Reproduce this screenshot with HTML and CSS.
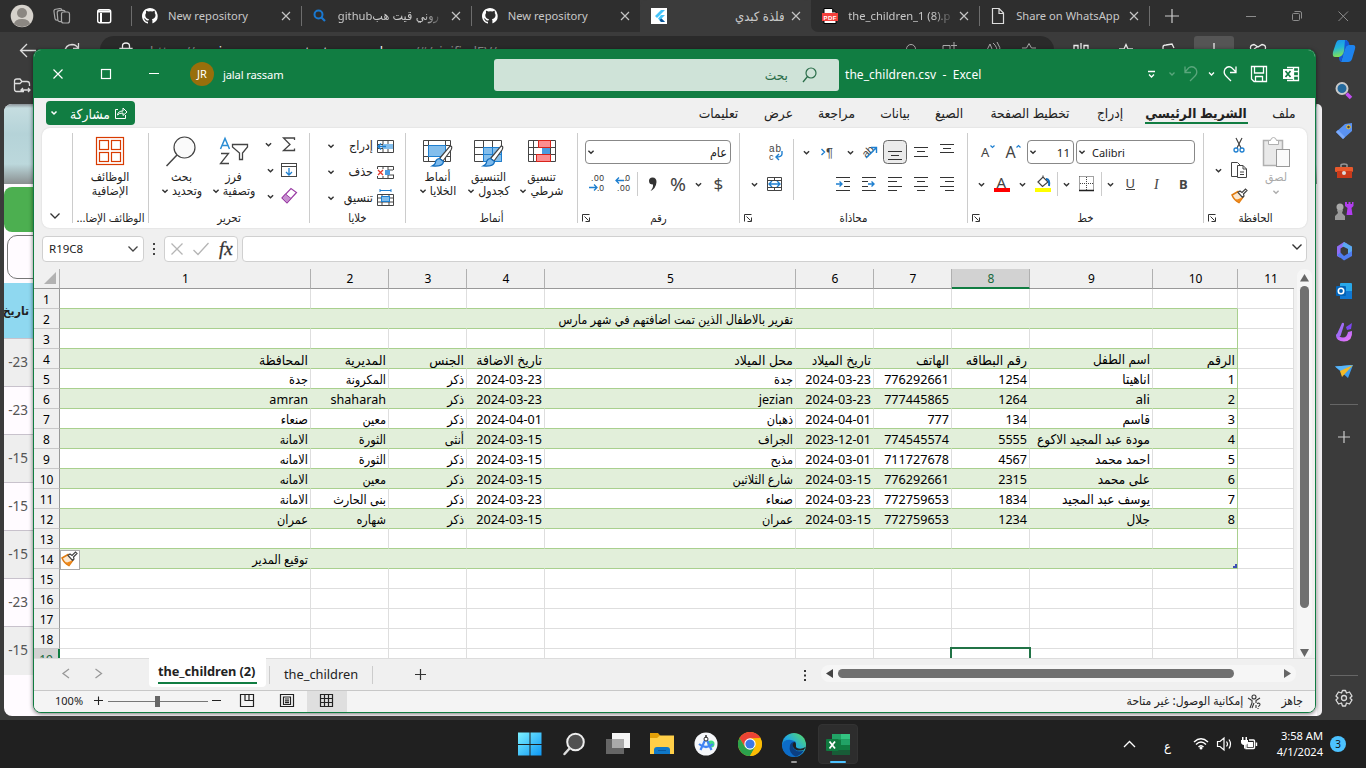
FILE: index.html
```html
<!DOCTYPE html>
<html lang="ar">
<head>
<meta charset="utf-8">
<title>the_children.csv - Excel</title>
<link rel="stylesheet" href="styles.css">
</head>
<body>
<svg class="defs" width="0" height="0">
  <defs>
    <path id="cv" d="M-2.6 -1.3L0 1.3L2.6 -1.3" fill="none" stroke="#333" stroke-width="1.4"/>
    <g id="x"><path d="M-4 -4L4 4M4 -4L-4 4" fill="none" stroke="#c4c4c4" stroke-width="1.2"/></g>
    <path id="gh" fill="#fff" d="M8 0C3.6 0 0 3.6 0 8c0 3.5 2.3 6.500 5.500 7.600.4.1.5-.2.5-.4v-1.500c-2 .4-2.600-.9-2.700-1.200-.3-.7-.7-1-1-1.200-.3-.2-.8-.7 0-.7s1.300.7 1.500 1c.9 1.400 2.200 1 2.700.8.1-.6.3-1 .6-1.300-2-.2-3.800-1-3.800-4 0-.9.3-1.600.8-2.100 0-.3-.4-1.200.1-2.300 0 0 .7-.2 2.200.8a7.500 7.500 0 0 1 4 0c1.500-1 2.200-.8 2.200-.8.5 1.100.2 2 .1 2.300.5.5.8 1.200.8 2.100 0 3-1.900 3.800-3.700 4 .3.3.6.7.6 1.500v2.300c0 .2.1.5.5.4A8 8 0 0 0 8 0z"/>
    <g id="launch" fill="none" stroke="#333"><path d="M.5 7.500V.5H7.500M2.500 2.500L6.500 6.500M7.500 3.500V7.500H3.500"/></g>
    <g id="brush"><path d="M1 7L7 3.500L12 9L8 14.500Q3 12 1 7z" fill="#fce8d0" stroke="#e07b10" stroke-width="1.500"/><path d="M3.500 10.500L8 14.500L11.500 9.500L6 11.500z" fill="#f08a1c"/><path d="M7 4.500L9 3L11 4.500L14.500 1L16 2.500L12.500 6L13 8L11.500 9.500z" fill="#fff" stroke="#444" stroke-width="1.200"/></g>
    <g id="paint"><path d="M27 2Q30 2 28 6L20 17L16.500 14.500z" fill="#fff" stroke="#444" stroke-width="1.200"/><path d="M16.500 14.500L20.500 17.500Q20 23 9 22Q13 20 12.500 17.500Q14 14.500 16.500 14.500z" fill="#7cb9ec" stroke="#0f6cbd" stroke-width="1.200"/></g>
    <linearGradient id="win" x1="0" y1="0" x2="1" y2="1"><stop offset="0" stop-color="#7df1ff"/><stop offset="1" stop-color="#0d97f5"/></linearGradient>
    <linearGradient id="edge" x1="0" y1="1" x2="1" y2="0"><stop offset="0" stop-color="#0b58b5"/><stop offset=".5" stop-color="#23a9e0"/><stop offset="1" stop-color="#5be05a"/></linearGradient>
    <linearGradient id="cop" x1="0" y1="0" x2=".2" y2="1"><stop offset="0" stop-color="#1a8ff0"/><stop offset=".5" stop-color="#23b5d8"/><stop offset="1" stop-color="#7ee05a"/></linearGradient>
    <linearGradient id="pur" x1="0" y1="0" x2="1" y2="1"><stop offset="0" stop-color="#9a5cff"/><stop offset="1" stop-color="#f07bf5"/></linearGradient>
  </defs>
</svg>

<div class="browser">
  <header class="tabstrip">
    <div class="lead">
      <svg width="131" height="32"><circle cx="22" cy="16" r="11.300" fill="#d6d2cc"/><circle cx="22" cy="13" r="5" fill="#8b8782"/><path d="M14 24Q15 19 22 19Q29 19 30 24Q22 30 14 24z" fill="#8b8782"/><g fill="#2e2e2e" stroke="#a8a8a8" stroke-width="1.200"><rect x="54.500" y="9" width="8" height="11" rx="2" transform="rotate(-8 58 15)"/><rect x="57.500" y="10.500" width="8" height="11" rx="2" transform="rotate(-5 61 16)"/><rect x="61.500" y="12" width="8" height="11" rx="2"/></g><rect x="97.700" y="9.700" width="13" height="13" rx="2" fill="none" stroke="#fff" stroke-width="1.400"/><path d="M98 11.500H111M101 13V22" stroke="#fff" stroke-width="2"/></svg>
    </div>
    <div class="tab"><svg width="16" height="16"><use href="#gh"/></svg><span class="tt">New repository</span><svg class="cl" width="10" height="10"><use href="#x" x="5" y="5"/></svg></div>
    <div class="tab"><svg width="16" height="16"><circle cx="6.500" cy="6.500" r="4" fill="none" stroke="#1a78d0" stroke-width="2"/><path d="M9.500 9.500L13 13" stroke="#1a78d0" stroke-width="2.200"/></svg><span class="tt fade">github<bdi>روني قيت هب</bdi></span><svg class="cl" width="10" height="10"><use href="#x" x="5" y="5"/></svg></div>
    <div class="tab"><svg width="16" height="16"><use href="#gh"/></svg><span class="tt">New repository</span><svg class="cl" width="10" height="10"><use href="#x" x="5" y="5"/></svg></div>
    <div class="tab active"><svg width="16" height="16"><rect width="16" height="16" fill="#fff"/><path d="M10 2L4 8L6 10L14 2zM10 7L7 10.500L10 14H14L10.500 10.500L14 7z" fill="#45c4f9"/><path d="M8.500 12L10.500 10.500L14 14H10z" fill="#0b5394"/></svg><span class="tt rt">فلذة كبدي</span><svg class="cl" width="10" height="10"><use href="#x" x="5" y="5"/></svg></div>
    <div class="tab nb"><svg width="16" height="16"><path d="M2 .5H10L14 4V15.500H2z" fill="#fff" stroke="#000"/><path d="M10 0V4.500H14.500z" fill="#222"/><rect x="0" y="5" width="16" height="8" fill="#f4403c"/><text x="1.500" y="11.500" font-size="6" font-weight="bold" fill="#fff" font-family="Liberation Sans" textLength="13">PDF</text></svg><span class="tt fade">the_children_1 (8).p</span><svg class="cl" width="10" height="10"><use href="#x" x="5" y="5"/></svg></div>
    <div class="tab"><svg width="16" height="16"><path d="M2.500 .5H9L13.500 5V15.500H2.500zM9 .5V5.500H13.500" fill="none" stroke="#ddd" stroke-width="1.200"/></svg><span class="tt">Share on WhatsApp</span><svg class="cl" width="10" height="10"><use href="#x" x="5" y="5"/></svg></div>
    <div class="tail"><svg width="217" height="32" viewBox="1149 0 217 32"><path d="M1165 16H1179M1172 9V23" stroke="#ccc" stroke-width="1.200"/><g fill="none" stroke="#8c8c8c"><path d="M1246 16.500H1256M1338.500 11.500L1348 21M1348 11.500L1338.500 21"/><rect x="1292.500" y="13.500" width="7" height="7" rx="1"/><path d="M1294.500 11.500H1300Q1301.500 11.500 1301.500 13V18.500"/></g></svg></div>
  </header>
  <div class="toolbar">
    <svg class="nav" width="100" height="80" viewBox="0 32 100 80"><g fill="none" stroke="#ddd" stroke-width="1.300"><path d="M36 50.500H21M27 44L20.500 50.500L27 57M65 52Q65 45 72 44.500Q76 44.500 78 48M78.500 43V48.500H73"/><path d="M24 91.500H16.500Q14.500 91.500 14.500 89V81Q14.500 79 17 79H20L22 81.500H27Q29.500 81.500 29.500 84V86M14.500 83.500H20L22 81.500M21 90H30M23 88L21 90L23 92M28 88L30 90L28 92"/></g></svg>
    <div class="address"><svg width="14" height="20"><path d="M1 8.500H13V16H1zM3.500 8.500V6Q3.500 3 7 3Q10.500 3 10.500 6V8.500" fill="none" stroke="#eee" stroke-width="1.300"/></svg><span class="url">https://<b>onniressonsunvestortenue.web.app</b>/#/vinifiedEV/</span><svg class="acts" width="136" height="20" viewBox="905 38 136 20"><g fill="none" stroke="#aaa"><circle cx="911" cy="49" r="4.500"/><path d="M943 56V45.500H950V56M954 42V49M951 45.500H957M985 54L990 44L994 54M993 43Q998 47 997 54M997 42Q1001 47 1000 54M1022 48H1026.500L1029 43.500L1031.500 48H1036"/></g></svg></div>
    <svg class="ext" width="260" height="18" viewBox="1060 36 260 18"><rect x="1194" y="36" width="40" height="20" rx="3" fill="#555"/><g fill="none" stroke="#eee" stroke-width="1.300"><path d="M1078 52V45.500H1074V52M1084 52V45.500H1088V52M1081 43V52M1119 49H1124L1126 44.500L1128 49H1133M1163 49V47Q1163 45 1166 45L1172 44L1174 48M1214 43V52M1251 50Q1249 45 1254 44.500L1258 47L1262 44.500Q1267 45 1265 50M1254 49L1257 47"/></g></svg>
  </div>
  <div class="work">
    <main class="page">
      <div class="photo"></div><div class="gbtn"></div><div class="wbtn"></div>
      <div class="th">تاريخ</div>
      <div class="td"><span>-23</span></div><div class="td"><span>-23</span></div><div class="td"><span>-15</span></div><div class="td"><span>-15</span></div><div class="td"><span>-15</span></div><div class="td"><span>-23</span></div><div class="td"><span>-15</span></div>
    </main>
    <div class="pageedge"></div>
  </div>
  <aside class="side">
    <svg viewBox="0 0 24 24"><path d="M7 1H15L12 14Q11 18 8 18H3Q0 18 1 13L4 4Q5 1 7 1z" fill="url(#cop)"/><path d="M16 6H21Q24 6 23 10L20 20Q19 23 16 23H9L13 10Q14 6 16 6z" fill="#1d83ee"/><path d="M13 1Q16 1 17 4L17.500 6Q14 6 13 10L9 23Q7 22 7 18Q11 17 12 12z" fill="#1458d8"/></svg>
    <svg viewBox="0 0 24 24"><circle cx="10" cy="9.500" r="5.500" fill="#246a9e" stroke="#c9c9c9" stroke-width="2"/><path d="M14.500 14.500L19 19" stroke="#c04df0" stroke-width="3.500"/></svg>
    <svg viewBox="0 0 24 24"><path d="M4 13L13 5L20 4V12L11 20Z" fill="#5a92f2"/><path d="M4 13L11 20L13 18L6 11z" fill="#7aaafc"/><circle cx="16.500" cy="8" r="1.800" fill="#444" stroke="#f3c32e"/></svg>
    <svg viewBox="0 0 24 24"><path d="M9 8V6Q9 5 12 5T15 6V8" fill="none" stroke="#999" stroke-width="1.500"/><rect x="3" y="8" width="18" height="5" rx="1" fill="#e8592c"/><rect x="5" y="12" width="15" height="7" fill="#c93a1b"/><circle cx="12" cy="14" r="2" fill="#ddd"/></svg>
    <svg viewBox="0 0 24 24"><circle cx="8" cy="8" r="3.500" fill="#aaa"/><path d="M5 11H11L10 14L13 17V21H3V17L6 14z" fill="#999"/><path d="M13 3H15V5H16.500V3H18.500V5H20V3H21.500V7L19.500 9L20.500 16H14.500L15.500 9L13 7z" fill="#b23df0"/></svg>
    <svg viewBox="0 0 24 24"><path d="M12 7.500L16 10V14.500L12 17L8 14.500V10z" fill="#3b3b3b"/><path d="M12 3L5 7.500V17L8.500 19V9.500L15.500 5z" fill="#8f6cf5"/><path d="M12 3L20 7.500V14L16 16V10L10 7z" fill="#5aa8f0"/><path d="M5 16L8.500 13.500L12 17L20 12V17L12 21.500z" fill="#4f7cf0"/></svg>
    <svg viewBox="0 0 24 24"><rect x="8" y="4" width="12" height="16" rx="1" fill="#28a8ea"/><path d="M8 12H20V20H8z" fill="#0f78d4"/><rect x="4" y="7" width="10" height="10" rx="1" fill="#0364b8"/><circle cx="9" cy="12" r="2.700" fill="none" stroke="#fff" stroke-width="1.600"/></svg>
    <svg viewBox="0 0 24 24"><path d="M6 15Q7 18.500 11 18.500Q15 18.500 16 13L20 12Q21 22 12 22.500Q4 22 4 16z" fill="url(#pur)"/><path d="M5.500 14L10 4Q12.500 3 12 6L8.500 17Q5 20 4 16z" fill="#a06cf5"/><path d="M14 8L20 4L19 10L15 11z" fill="#7b46f0"/></svg>
    <svg viewBox="0 0 24 24"><path d="M3 7.500L21 6L16 19L11 14.500z" fill="#3b9df0"/><path d="M3 7.500L21 6L9 12z" fill="#59b6fa"/><path d="M21 6L8 12L10 18z" fill="#f3b928"/></svg>
    <hr class="h1">
    <svg viewBox="0 0 24 24" class="plus"><path d="M6 12H18M12 6V18" stroke="#ccc" stroke-width="1.200"/></svg>
    <hr class="h2">
    <svg viewBox="0 0 24 24" class="gear"><g fill="none" stroke="#ddd" stroke-width="1.300"><path d="M10.500 4.500H13.500L14.500 7L17.500 6L20 10L18 12L20 14L17.500 18L14.500 17L13.500 20H10.500L9.500 17L6.500 18L4 14L6 12L4 10L6.500 6L9.500 7z" stroke-linejoin="round"/><circle cx="12" cy="12" r="2.500"/></g></svg>
  </aside>
</div>

<section class="excel">
  <div class="title">
    <svg width="160" height="48" viewBox="34 50 160 48"><g fill="none" stroke="#fff" stroke-width="1.200"><path d="M53.500 69.500L62.500 78.500M62.500 69.500L53.500 78.500M149 73.500H159"/><rect x="101.500" y="69.500" width="9" height="9"/></g></svg>
    <span class="jr">JR</span><span class="uname">jalal rassam</span>
    <div class="search"><span>بحث</span><svg width="16" height="16"><circle cx="9" cy="6" r="5" fill="none" stroke="#2b6e4a" stroke-width="1.200"/><path d="M5.500 9.500L1 15" stroke="#2b6e4a" stroke-width="1.300"/></svg></div>
    <span class="doc">the_children.csv&nbsp; -&nbsp; Excel</span>
    <svg class="qat" width="175" height="48" viewBox="1140 50 175 48"><g fill="none" stroke="#fff" stroke-width="1.300"><path d="M1148 71.500H1155M1149 74.500L1151.500 77L1154 74.500"/><path d="M1209 72.500L1211.500 75L1214 72.500"/><path d="M1236 66.500V72.500H1230M1236 72L1231.500 67.500Q1228 65.500 1225 69Q1223 73 1226 76L1231 81"/><g stroke="#5aa67c"><path d="M1169.500 72.500L1172 75L1174.500 72.500M1185 66.500V72.500H1191M1185 72L1189 67.500Q1193 65.500 1196 69Q1198 73 1195 76L1190 81"/></g><path d="M1251.500 66.500H1266.500V81.500H1254L1251.500 79zM1254.500 66.500V73H1263.500V66.500M1255.500 81V76.500H1262.500V81"/><path d="M1287 67.500H1298.500V80.500H1287M1287 71.500H1299M1287 76H1299M1293.500 67V81"/></g><rect x="1283" y="69" width="10" height="10" fill="#fff"/><path d="M1285.500 71L1290.500 77M1290.500 71L1285.500 77" stroke="#107c41" stroke-width="1.700"/></svg>
  </div>

  <nav class="tabs">
    <div class="share"><svg width="10" height="8"><path d="M2.500 2.500L5 5L7.500 2.500" fill="none" stroke="#fff" stroke-width="1.500"/></svg><span>مشاركة</span><svg width="14" height="14"><path d="M4 3.500H1.500V12.500H11.500V9M3.500 9Q4 5 9 5V2L13 6L9 9.500V7Q5 7 3.500 9z" fill="none" stroke="#fff"/></svg></div>
    <div class="rtabs"><span>تعليمات</span><span>عرض</span><span>مراجعة</span><span>بيانات</span><span>الصيغ</span><span>تخطيط الصفحة</span><span>إدراج</span><span class="on"><b>الشريط الرئيسي</b></span><span>ملف</span></div>
  </nav>

  <div class="ribbon">
    <div class="g g0"><svg width="12" height="8"><path d="M1.500 1.500L6 6L10.500 1.500" fill="none" stroke="#333" stroke-width="1.300"/></svg></div>
    <div class="g g1"><div class="body"><div class="big"><svg width="30" height="38" viewBox="0 0 30 38"><g fill="none" stroke="#d83b01" stroke-width="1.200"><rect x="1.500" y="5.500" width="27" height="27"/><rect x="4.500" y="8.500" width="9" height="9"/><rect x="16.500" y="8.500" width="9" height="9"/><rect x="4.500" y="20.500" width="9" height="9"/><rect x="16.500" y="20.500" width="9" height="9"/></g></svg><span>الوظائف</span><span>الإضافية</span></div></div><div class="lab"><span>الوظائف الإضا...</span></div></div>
    <div class="g g2"><div class="body">
      <div class="big"><svg width="32" height="38" viewBox="166 132 32 38"><circle cx="184.500" cy="147.500" r="10.500" fill="#fafafa" stroke="#444" stroke-width="1.200"/><path d="M177 155L166.500 166" stroke="#444" stroke-width="1.500"/></svg><span>بحث</span><span class="dd">وتحديد<svg width="8" height="6"><use href="#cv" x="4" y="3"/></svg></span></div>
      <div class="big"><svg width="32" height="38" viewBox="217 132 32 38"><path d="M219.500 149L224 138.500L228.500 149M221 145.500H227" fill="none" stroke="#2a8dd4" stroke-width="1.500"/><path d="M220 153.500H227.500L219.500 163.500H228M231.500 144.500H246.500V147L241.500 153V159.500H238.500V153L231.500 147z" fill="none" stroke="#444" stroke-width="1.300"/></svg><span>فرز</span><span class="dd">وتصفية<svg width="8" height="6"><use href="#cv" x="4" y="3"/></svg></span></div>
      <svg width="40" height="78" viewBox="262 132 40 78"><use href="#cv" x="268.500" y="144.500"/><use href="#cv" x="270.500" y="170.500"/><use href="#cv" x="270.500" y="196.500"/><path d="M294.500 140V138H283.500L290 144.500L283.500 150.500H294.500V148.500" fill="none" stroke="#444" stroke-width="1.300"/><rect x="281.500" y="163.500" width="15" height="13" fill="#fff" stroke="#444"/><path d="M281 166.500H297" stroke="#444"/><path d="M289 168V175M286 172L289 175L292 172" fill="none" stroke="#1e7fd0" stroke-width="1.300"/><path d="M282 198L291 188.500L296.500 192.500L287 203z" fill="#fff" stroke="#9b3fa5" stroke-width="1.200"/><path d="M282 198L285.500 194L291 198.500L287 203z" fill="#c78fd0" stroke="#9b3fa5"/></svg>
    </div><div class="lab"><span>تحرير</span></div></div>
    <div class="g g3"><div class="body col">
      <div class="sm"><svg width="8" height="6"><use href="#cv" x="4" y="3"/></svg><span>إدراج</span><svg width="17" height="15" viewBox="0 0 17 15"><path d="M.5 1.500H16.500V13.500H.5zM.5 5.500H16M.5 9.500H16M6 1V14M11 1V14" fill="none" stroke="#444"/><rect x="6" y="5" width="10" height="5" fill="#83beec"/><path d="M9 7.500H1M4 4.500L1 7.500L4 10.500" fill="none" stroke="#1e7fd0" stroke-width="1.300"/></svg></div>
      <div class="sm"><svg width="8" height="6"><use href="#cv" x="4" y="3"/></svg><span>حذف</span><svg width="17" height="15" viewBox="0 0 17 15"><path d="M.5 4V1.500H16.500V5M16.500 9.500V13.500H.5V11M6 1V4M11 1V14M6 11V14M11 5H16M11 10H16" fill="none" stroke="#444"/><rect x="8" y="5" width="5" height="5" fill="#4a9be0"/><path d="M1 5L6 10M6 5L1 10" stroke="#e03a2f" stroke-width="1.300"/></svg></div>
      <div class="sm"><svg width="8" height="6"><use href="#cv" x="4" y="3"/></svg><span>تنسيق</span><svg width="17" height="18" viewBox="0 0 17 18"><path d="M.5 5.500H16.500V16.500H.5zM.5 9H16M.5 13H16M5 5V17M12 5V17" fill="none" stroke="#444"/><rect x="4.500" y="7.500" width="8" height="5" fill="#83beec" stroke="#1e7fd0"/><path d="M3 1.500H14M3 0V3M14 0V3" stroke="#1e7fd0"/></svg></div>
    </div><div class="lab"><span>خلايا</span></div></div>
    <div class="g g4"><div class="body">
      <div class="big"><svg width="32" height="38" viewBox="-1 -8 32 38"><path d="M.5 .5H27.500V21.500H.5zM.5 5.500H27M.5 16.500H27M5.500 0V22M22.500 0V22" fill="#fff" stroke="#444"/><rect x="5.500" y="5.500" width="17" height="11" fill="#83beec" stroke="#1e7fd0"/><use href="#paint" y="4"/></svg><span>أنماط</span><span class="dd">الخلايا<svg width="8" height="6"><use href="#cv" x="4" y="3"/></svg></span></div>
      <div class="big"><svg width="32" height="38" viewBox="-1 -8 32 38"><path d="M.5 .5H27.500V21.500H.5zM.5 7.500H27M.5 14.500H27M9.500 0V22M18.500 0V22" fill="#fff" stroke="#444"/><path d="M9.500 7.500H27.500V21.500H9.500zM9.500 14.500H27M18.500 7.500V21" fill="#83beec" stroke="#1e7fd0"/><use href="#paint" y="4"/></svg><span>التنسيق</span><span class="dd">كجدول<svg width="8" height="6"><use href="#cv" x="4" y="3"/></svg></span></div>
      <div class="big"><svg width="32" height="38" viewBox="-2 -8 32 38"><path d="M.5 .5H27.500V21.500H.5zM.5 7.500H27M.5 14.500H27M5.500 0V22M22.500 0V22" fill="#fff" stroke="#444"/><path d="M10.500 .5H22.500V7.500H10.500zM8.500 14.500H22.500V21.500H8.500z" fill="#fb8d90" stroke="#d8241b"/><rect x="14" y="8" width="8" height="6" fill="#4a9be0"/></svg><span>تنسيق</span><span class="dd">شرطي<svg width="8" height="6"><use href="#cv" x="4" y="3"/></svg></span></div>
    </div><div class="lab"><span>أنماط</span></div></div>
    <div class="g g5"><div class="body col">
      <div class="combo wide"><svg width="8" height="6"><use href="#cv" x="4" y="3"/></svg><span>عام</span></div>
      <svg width="161" height="28" viewBox="578 170 161 28"><g font-family="Liberation Sans,sans-serif" font-size="8.500" fill="#333"><text x="591" y="181" textLength="13">.00</text><text x="597" y="191" textLength="7">.0</text><text x="624" y="181" textLength="6">.0</text><text x="617" y="191" textLength="13">.00</text></g><g font-family="Noto Sans,sans-serif" fill="#444"><text x="670" y="190.500" font-size="18" textLength="16" lengthAdjust="spacingAndGlyphs">%</text><text x="713.500" y="190" font-size="17">$</text></g><path d="M652.500 177.500Q656.500 177.500 656.500 182Q656 188.500 650.500 191Q653.500 187.500 653 184.500Q649 184.500 649 181Q649 177.500 652.500 177.500z" fill="#333"/><path d="M589 187.500H597M594 184.500L597 187.500L594 190.500M624 180.500H616M619 177.500L616 180.500L619 183.500" fill="none" stroke="#1e7fd0" stroke-width="1.300"/><path d="M637.500 172V196" stroke="#ccc"/><use href="#cv" x="698.500" y="184.500"/></svg>
    </div><div class="lab"><span>رقم</span><svg width="8" height="8"><use href="#launch"/></svg></div></div>
    <div class="g g6"><div class="body">
      <svg width="227" height="80" viewBox="740 132 227 80"><path d="M793.500 139V200" stroke="#ccc"/><rect x="883.500" y="140.500" width="23" height="23" rx="4" fill="#ebebeb" stroke="#666"/>
      <g font-family="Liberation Sans,sans-serif" fill="#444" font-size="11"><text x="769" y="152" font-size="10" textLength="12">ab</text><text x="769" y="160" font-size="9">c</text><text x="826" y="157" font-size="13">¶</text><text x="862" y="156" transform="rotate(-45 867 152)" textLength="12">ab</text></g>
      <g fill="none" stroke="#1e7fd0" stroke-width="1.400"><path d="M782 151V154Q782 157 776 157M779 154L776 157L779 160M821.500 149L824.500 152L821.500 155M866 158L876 148M871 147.500H876.500V153"/><path d="M769 184H780M772 181L769 184L772 187M777 181L780 184L777 187M836 184H842M839.500 181.500L842 184L839.500 186.500M868 184H874M871.500 181.500L874 184L871.500 186.500"/></g>
      <path d="M767.500 177.500H781.500V190.500H767.500zM767.500 180.500H781.500M767.500 187.500H781.500M774.500 177.500V180.500M774.500 187.500V190.500" fill="none" stroke="#444"/>
      <g stroke="#333"><path d="M888 151.500H902M891 155.500H899M888 159.500H902M914 147.500H928M917 151.500H925M914 156.500H928M940 144.500H954M943 148.500H951M940 152.500H954"/><path d="M836 177.500H850M844 181.500H850M844 186.500H850M836 190.500H850M862 177.500H876M862 181.500H868M862 186.500H868M862 190.500H876M888 177.500H902M888 181.500H897M888 186.500H902M888 190.500H897M914 177.500H928M917 181.500H925M914 186.500H928M917 190.500H925M940 177.500H954M945 181.500H954M940 186.500H954M945 190.500H954"/></g>
      <use href="#cv" x="806.500" y="152.500"/><use href="#cv" x="850.500" y="152.500"/><use href="#cv" x="754.500" y="184.500"/></svg>
    </div><div class="lab"><span>محاذاة</span><svg width="8" height="8"><use href="#launch"/></svg></div></div>
    <div class="g g7"><div class="body col">
      <div class="frow"><svg width="54" height="24" viewBox="973 140 54 24"><g font-family="Noto Sans,sans-serif" fill="#444"><text x="981" y="157" font-size="13">A</text><text x="1005.500" y="157.500" font-size="16">A</text></g><path d="M990.500 145.500L992.500 147.500L994.500 145.500M1016.500 147.500L1018.500 145.500L1020.500 147.500" fill="none" stroke="#1e7fd0" stroke-width="1.200"/></svg>
        <div class="combo s"><svg width="8" height="6"><use href="#cv" x="4" y="3"/></svg><span>11</span></div><div class="combo f"><svg width="8" height="6"><use href="#cv" x="4" y="3"/></svg><span>Calibri</span></div></div>
      <svg width="230" height="28" viewBox="973 170 230 28"><g font-family="Noto Sans,sans-serif" fill="#444"><text x="996.500" y="188" font-size="15">A</text><text x="1125.500" y="188" font-size="13">U</text><text x="1154" y="188.500" font-size="14" font-style="italic" font-family="Liberation Serif">I</text><text x="1179" y="188.500" font-size="13" font-weight="bold">B</text></g><path d="M1126 189.500H1135" stroke="#444"/><rect x="994" y="188" width="16" height="4" fill="#f00"/><rect x="1035" y="188" width="16" height="4" fill="#ff0"/><path d="M1038 182L1043 177L1048 182L1042.500 186.500zM1043 177V175.500" fill="#fff" stroke="#444" stroke-width="1.200"/><path d="M1046 179Q1050 179 1049 186" stroke="#0f6cbd" stroke-width="2" fill="none"/><path d="M1057.500 172V196M1101.500 172V196" stroke="#ccc"/><path d="M1079.500 176.500H1093.500V190M1079.500 176.500V190M1086.500 177V190M1080 183.500H1093" fill="none" stroke="#444" stroke-dasharray="1 1"/><path d="M1079 190.500H1094" stroke="#222" stroke-width="1.500"/><use href="#cv" x="981.500" y="184.500"/><use href="#cv" x="1022.500" y="184.500"/><use href="#cv" x="1066.500" y="184.500"/><use href="#cv" x="1110.500" y="184.500"/></svg>
    </div><div class="lab"><span>خط</span><svg width="8" height="8"><use href="#launch"/></svg></div></div>
    <div class="g g8"><div class="body">
      <svg width="48" height="78" viewBox="1205 132 48 78"><path d="M1236 138L1241 148M1242 138L1237 148" stroke="#444" stroke-width="1.200"/><g fill="none" stroke="#1e7fd0" stroke-width="1.300"><circle cx="1236" cy="150" r="2"/><circle cx="1242" cy="150" r="2"/></g><g fill="#fff" stroke="#444"><path d="M1231.500 162.500H1237.500L1240 165V176.500H1231.500z"/><path d="M1237.500 165.500H1243L1246.500 169V177.500H1237.500zM1243 165.500V169H1246.500M1240 172H1244M1240 174.500H1244"/></g><use href="#brush" x="1231" y="188"/><use href="#cv" x="1218.500" y="170.500"/></svg>
      <div class="big paste"><svg width="30" height="38" viewBox="1261 132 30 38"><rect x="1263.500" y="140.500" width="19" height="25" fill="#e9e9e9" stroke="#b0b0b0" stroke-width="1.500"/><path d="M1268.500 144.500V140.500H1270.500Q1271 137.500 1273.500 137.500T1276.500 140.500H1278.500V144.500z" fill="#fff" stroke="#b0b0b0"/><rect x="1276.500" y="149.500" width="13" height="17" fill="#fafafa" stroke="#999"/></svg><span>لصق</span><svg width="8" height="6" opacity=".4"><use href="#cv" x="4" y="3"/></svg></div>
    </div><div class="lab"><span>الحافظة</span><svg width="8" height="8"><use href="#launch"/></svg></div></div>
  </div>

  <div class="fbar">
    <div class="box name"><span>R19C8</span><svg width="12" height="8"><path d="M1.500 1.500L6 6L10.500 1.500" fill="none" stroke="#444" stroke-width="1.300"/></svg></div>
    <svg width="20" height="14"><path d="M9 1h2v2h-2zM9 6h2v2h-2zM9 11h2v2h-2z" fill="#444"/></svg>
    <div class="box fx"><svg width="42" height="16"><path d="M1.500 2.500L12.500 13.500M12.500 2.500L1.500 13.500M23.500 9L28 13.500L38.500 2" fill="none" stroke="#b5b5b5" stroke-width="1.300"/></svg><i>fx</i></div>
    <div class="box formula"><svg width="12" height="8"><path d="M1.500 1.500L6 6L10.500 1.500" fill="none" stroke="#333" stroke-width="1.400"/></svg></div>
  </div>

  <div class="sheet">
    <div class="gridclip">
    <table class="grid">
      <colgroup><col class="c0"><col class="w251"><col class="w78"><col class="w78"><col class="w78"><col class="w251"><col class="w78"><col class="w78"><col class="w78"><col class="w123"><col class="w85"><col class="w56"></colgroup>
      <thead><tr><th class="corner"><svg width="13" height="13"><path d="M12 0V12H0z" fill="#b2b2b2"/></svg></th><th>1</th><th>2</th><th>3</th><th>4</th><th>5</th><th>6</th><th>7</th><th class="sel">8</th><th>9</th><th>10</th><th class="last">11</th></tr></thead>
      <tbody>
      <tr class="gl"><th>1</th><td></td><td></td><td></td><td></td><td></td><td></td><td></td><td></td><td></td><td></td><td></td></tr>
      <tr class="gl gr"><th>2</th><td></td><td></td><td></td><td></td><td>تقرير بالاطفال الذين تمت اضافتهم في شهر مارس</td><td></td><td></td><td></td><td></td><td></td><td></td></tr>
      <tr class="gl"><th>3</th><td></td><td></td><td></td><td></td><td></td><td></td><td></td><td></td><td></td><td></td><td></td></tr>
      <tr class="gl gr heads"><th>4</th><td>المحافظة</td><td>المديرية</td><td>الجنس</td><td>تاريخ الاضافة</td><td>محل الميلاد</td><td>تاريخ الميلاد</td><td>الهاتف</td><td>رقم البطاقه</td><td>اسم الطفل</td><td>الرقم</td><td></td></tr>
      <tr class="gl"><th>5</th><td>جدة</td><td>المكرونة</td><td>ذكر</td><td>2024-03-23</td><td>جدة</td><td>2024-03-23</td><td>776292661</td><td>1254</td><td>اناهيتا</td><td>1</td><td></td></tr>
      <tr class="gl gr"><th>6</th><td>amran</td><td>shaharah</td><td>ذكر</td><td>2024-03-23</td><td>jezian</td><td>2024-03-23</td><td>777445865</td><td>1264</td><td>ali</td><td>2</td><td></td></tr>
      <tr class="gl"><th>7</th><td>صنعاء</td><td>معين</td><td>ذكر</td><td>2024-04-01</td><td>ذهبان</td><td>2024-04-01</td><td>777</td><td>134</td><td>قاسم</td><td>3</td><td></td></tr>
      <tr class="gl gr"><th>8</th><td>الامانة</td><td>الثورة</td><td>أنثى</td><td>2024-03-15</td><td>الجراف</td><td>2023-12-01</td><td>774545574</td><td>5555</td><td>مودة عبد المجيد الاكوع</td><td>4</td><td></td></tr>
      <tr class="gl"><th>9</th><td>الامانه</td><td>الثورة</td><td>ذكر</td><td>2024-03-15</td><td>مذبح</td><td>2024-03-01</td><td>711727678</td><td>4567</td><td>احمد محمد</td><td>5</td><td></td></tr>
      <tr class="gl gr"><th>10</th><td>الامانه</td><td>معين</td><td>ذكر</td><td>2024-03-15</td><td>شارع الثلاثين</td><td>2024-03-15</td><td>776292661</td><td>2315</td><td>على محمد</td><td>6</td><td></td></tr>
      <tr class="gl"><th>11</th><td>الامانة</td><td>بنى الحارث</td><td>ذكر</td><td>2024-03-23</td><td>صنعاء</td><td>2024-03-23</td><td>772759653</td><td>1834</td><td>يوسف عبد المجيد</td><td>7</td><td></td></tr>
      <tr class="gl gr"><th>12</th><td>عمران</td><td>شهاره</td><td>ذكر</td><td>2024-03-15</td><td>عمران</td><td>2024-03-15</td><td>772759653</td><td>1234</td><td>جلال</td><td>8</td><td></td></tr>
      <tr class="gl"><th>13</th><td></td><td></td><td></td><td></td><td></td><td></td><td></td><td></td><td></td><td></td><td></td></tr>
      <tr class="gl gr"><th>14</th><td class="rel"><span class="paint"><svg width="18" height="17" viewBox="0 0 18 17"><use href="#brush"/></svg></span>توقيع المدير</td><td></td><td></td><td></td><td></td><td></td><td></td><td></td><td></td><td class="rel"><i class="handle"></i></td><td></td></tr>
      <tr><th>15</th><td></td><td></td><td></td><td></td><td></td><td></td><td></td><td></td><td></td><td></td><td></td></tr>
      <tr><th>16</th><td></td><td></td><td></td><td></td><td></td><td></td><td></td><td></td><td></td><td></td><td></td></tr>
      <tr><th>17</th><td></td><td></td><td></td><td></td><td></td><td></td><td></td><td></td><td></td><td></td><td></td></tr>
      <tr><th>18</th><td></td><td></td><td></td><td></td><td></td><td></td><td></td><td></td><td></td><td></td><td></td></tr>
      <tr><th class="rsel">19</th><td></td><td></td><td></td><td></td><td></td><td></td><td></td><td class="rel"><i class="cursor"></i></td><td></td><td></td><td></td></tr>
      </tbody>
    </table>
    </div>
    <div class="vscroll"><svg width="9" height="17"><path d="M4.500 5L9 12.500H0z" fill="#666"/></svg><i></i><svg class="dn" width="9" height="10"><path d="M0 1H9L4.500 9z" fill="#666"/></svg></div>
  </div>

  <div class="stabs">
    <svg class="arr" width="115" height="32" viewBox="34 658 115 32"><path d="M69 669L63 673.500L69 678M95.500 669L101.500 673.500L95.500 678" fill="none" stroke="#999" stroke-width="1.300"/></svg>
    <div class="st on"><span>the_children (2)</span></div>
    <div class="st"><span>the_children</span></div>
    <svg class="add" width="11" height="11"><path d="M0 5.500H11M5.500 0V11" stroke="#333" stroke-width="1.200"/></svg>
    <svg class="dots" width="2" height="12"><path d="M0 0h2v2H0zM0 4.500h2v2H0zM0 9h2v2H0z" fill="#333"/></svg>
    <div class="hscroll"><svg width="8" height="10"><path d="M7 0V9L0 4.500z" fill="#444"/></svg><i></i><svg class="r" width="8" height="10"><path d="M0 0V9L7 4.500z" fill="#666"/></svg></div>
  </div>

  <footer class="status">
    <span class="pct">100%</span>
    <svg width="132" height="21" viewBox="91 691 132 21"><path d="M94 700.500H103M98.500 696.500V705M212 700.500H221" stroke="#222" stroke-width="1.100"/><path d="M108 701.500H208" stroke="#777"/><rect x="155" y="696" width="5" height="11" fill="#666"/></svg>
    <svg width="124" height="21" viewBox="223 691 124 21"><rect x="307" y="691" width="40" height="21" fill="#dfdfdf"/><g fill="none" stroke="#222" stroke-width="1.200"><path d="M240.500 694.500H253.500V706.500H240.500zM245 694.500V700.500H249V694.500M249 700.500H253.500"/><path d="M280.500 694.500H293.500V706.500H280.500zM283.500 697H290.500V704.500H283.500zM285 699H289M285 700.800H289M285 702.600H289"/><path d="M320.500 694.500H332.500V706.500H320.500zM320.500 698.500H332.500M320.500 702.500H332.500M324.500 694.500V706.500M328.500 694.500V706.500"/></g></svg>
    <span class="acc">إمكانية الوصول: غير متاحة</span>
    <svg width="16" height="16"><g fill="none" stroke="#333" stroke-width="1.100"><circle cx="8" cy="3" r="2"/><path d="M2 4L6 6.500V9L4 14M14 4L10 6.500V9M8 9L6 14M11 9.500Q14 8.500 14 10.500Q14 12 12 12.500M12 14V15M10 11V14"/></g></svg>
    <span class="ready">جاهز</span>
  </footer>
</section>

<footer class="taskbar">
  <div class="apps">
    <svg viewBox="0 0 24 24"><path d="M0 .5H11.500V12H0zM12.500 .5H23.500V12H12.500zM0 13H11.500V23.500H0zM12.500 13H23.500V23.500H12.500z" fill="url(#win)"/></svg>
    <svg viewBox="0 0 24 24"><circle cx="13.500" cy="10" r="8.300" fill="#505050" stroke="#eee" stroke-width="2"/><path d="M7.500 16.500L2.500 22" stroke="#ddd" stroke-width="2.500" stroke-linecap="round"/></svg>
    <svg viewBox="0 0 24 24"><rect x="0" y="7" width="18" height="15" fill="#666"/><rect x="6" y="1" width="18" height="15" fill="#f4f4f4"/><rect x="6" y="7" width="12" height="9" fill="#aaa"/></svg>
    <svg viewBox="0 0 24 24"><path d="M0 1H8L10.500 4V8H0z" fill="#e3a008"/><path d="M0 6H7L10 3.500H24V22H0z" fill="#ffcf48"/><path d="M4 22V18Q4 15 7 15H17Q20 15 20 18V22z" fill="#0f78c8"/><path d="M8 18.500H16" stroke="#0a5aa0"/></svg>
    <svg viewBox="0 0 24 24"><circle cx="12" cy="12" r="11.500" fill="#f5f7fa"/><circle cx="17" cy="12" r="3.500" fill="#3ddc84"/><path d="M12 6L6.500 18M12 6L17.500 18M5 12Q12 18 19 12" fill="none" stroke="#4285f4" stroke-width="2.200"/><circle cx="12" cy="7" r="2" fill="#fff" stroke="#333"/><path d="M12 3V6" stroke="#333" stroke-width="1.500"/></svg>
    <svg viewBox="0 0 24 24"><circle cx="12" cy="12" r="12" fill="#fbbc05"/><path d="M1.600 6A12 12 0 0 1 22.400 6L12 6.500L7 15z" fill="#ea4335"/><path d="M1.600 6A12 12 0 0 0 12 24L17 15L7 15z" fill="#2ba24c"/><path d="M12 6.500H22.600A12 12 0 0 1 12 24L17.200 15z" fill="#fbbc05"/><circle cx="12" cy="12" r="5.700" fill="#fff"/><circle cx="12" cy="12" r="4.600" fill="#3b78e7"/></svg>
    <div class="open"><svg viewBox="0 0 24 24"><circle cx="12" cy="12" r="12" fill="url(#edge)"/><path d="M0 12Q2 6 9 7Q15 8 14 12Q12 14 13 16Q16 19 22 17.500Q18 24 12 24Q1 23 0 12z" fill="#0c6cc8"/><path d="M8 12Q6 20 14 23.800Q19 22 22 17.500Q15 20 11.500 15.500Q10 12 14 9Q10 8 8 12z" fill="#0b3f82"/><path d="M14 12.500Q14.500 10 12.500 9Q9.500 11 11.500 14.500Q14 19 21.500 17Q24 14 23.500 14Q19 17 15 15Q13.500 14 14 12.500z" fill="#202020"/></svg></div>
    <div class="open run"><svg viewBox="0 0 24 24"><path d="M6 1H24V22H6z" fill="#107c41"/><path d="M6 1H15V6.500H6z" fill="#21a366"/><path d="M15 1H24V6.500H15z" fill="#33c481"/><path d="M15 6.500H24V12H15z" fill="#21a366"/><path d="M6 17H24V22H6z" fill="#185c37"/><rect x="0" y="6" width="12.500" height="12" rx="1" fill="#0f7a3f"/><path d="M3.500 8.500L9 15.500M9 8.500L3.500 15.500" stroke="#fff" stroke-width="1.800"/></svg></div>
  </div>
  <div class="tray">
    <svg class="up" width="14" height="8"><path d="M1 7L6.500 1.500L12 7" fill="none" stroke="#fff" stroke-width="1.300"/></svg>
    <span class="ain">ع</span>
    <svg width="66" height="20" viewBox="1192 734 66 20"><g fill="none" stroke="#fff" stroke-width="1.400"><path d="M1194 742Q1201 735.500 1208 742M1196 744.500Q1201 739.500 1206 744.500M1198.500 747Q1201 744.500 1203.500 747"/><path d="M1217.500 741.500H1220L1224 738V750L1220 746.500H1217.500zM1226.500 741.500Q1228.500 744 1226.500 746.500M1229 739.500Q1232 744 1229 748.500" stroke-width="1.200"/><path d="M1249 740H1253.500Q1254.500 740 1254.500 741V747.500Q1254.500 748.500 1253.500 748.500H1246V744M1256.500 742.500V746"/></g><circle cx="1201" cy="748" r="1.500" fill="#fff"/><path d="M1248 742H1253V747H1247.500V744zM1241 740H1248V742Q1248 744.500 1245.500 745V748.500H1244V745Q1241 744.500 1241 742zM1242 737H1243.500V740H1242zM1245.500 737H1247V740H1245.500z" fill="#fff"/></svg>
    <div class="clock"><span>3:58 AM</span><span>4/1/2024</span></div>
    <span class="badge">3</span>
  </div>
</footer>
</body>
</html>
```
FILE: styles.css
```css
* { box-sizing: border-box; }
html, body { margin: 0; height: 768px; overflow: hidden; }
body { position: relative; width: 1366px; background: #202020; font: 12px "Noto Sans", "DejaVu Sans Condensed", "DejaVu Sans", sans-serif; color: #222; }
svg { display: block; flex: none; }
.defs { position: absolute; }
span { white-space: nowrap; }

/* browser behind */
.browser { height: 720px; background: #3b3b3b; display: grid; grid-template: 32px 72px 616px / 1322px 44px; }
.tabstrip { grid-column: 1 / 3; display: flex; background: #3b3b3b; }
.lead, .tail { background: #2e2e2e; }
.tab { width: 170px; height: 32px; background: #2e2e2e; display: flex; align-items: center; padding: 0 10px 0 11px; position: relative; }
.tab::before { content: ""; position: absolute; left: 0; top: 6px; height: 20px; width: 1px; background: #6d6d6d; }
.tail { position: relative; width: 217px; }
.tail::before { content: ""; position: absolute; left: 0; top: 6px; height: 20px; width: 1px; background: #6d6d6d; }
.tab .tt { margin-left: 10px; width: 107px; overflow: hidden; color: #c8c8c8; font-size: 11.2px; line-height: 20px; }
.tab bdi { font-size: 12.5px; }
.tab .cl { margin-left: auto; }
.tab .fade { -webkit-mask-image: linear-gradient(90deg, #000 80%, transparent); mask-image: linear-gradient(90deg, #000 80%, transparent); }
.tab .rt { text-align: right; direction: rtl; font-size: 13px; }
.tab.active { background: #3b3b3b; width: 171px; border-radius: 7px 7px 0 0; }
.tab.active::before, .tab.nb::before { display: none; }
.tab.nb { width: 168px; border-radius: 0 0 0 7px; }
.toolbar { grid-column: 1 / 3; display: flex; align-items: flex-start; }
.address { margin-top: 4px; width: 954px; height: 30px; border-radius: 14px; background: #2a2a2a; display: flex; align-items: flex-start; padding: 4px 13px 0 19px; }
.url { color: #8a8a8a; font-size: 13px; line-height: 23px; margin-left: 17px; }
.url b { font-weight: normal; color: #fff; }
.acts { margin: -2px 0 0 auto; }
.ext { margin: 4px 0 0 6px; }
.work { display: flex; padding-left: 4px; height: 612px; }
.page { width: 1313px; background: #fffbff; border-radius: 8px 0 0 8px; overflow: hidden; }
.pageedge { width: 5px; background: #f1eff1; border-radius: 0 7px 7px 0; }
.photo { height: 80px; background: linear-gradient(#8a9298 0, #c5dde0 4px, #b5d3d8 30px, #bcd8dc 60px, #8a8f90); }
.gbtn { margin-top: 3px; height: 45px; width: 600px; background: #4caf50; border-radius: 8px; }
.wbtn { margin: 3px 0 4px 3px; height: 44px; width: 500px; border: 1px solid #777; border-radius: 10px; }
.th { height: 56px; width: 30px; background: #8fd8f0; padding-right: 5px; font-weight: bold; font-size: 12px; line-height: 56px; direction: rtl; border-bottom: 1px solid #c8c2cc; }
.td { height: 48px; width: 30px; display: flex; justify-content: flex-end; padding-right: 6px; font-size: 13.5px; line-height: 47px; color: #555; border-bottom: 1px solid #c8c2cc; background: #fffbff; }
.td:nth-child(odd) { background: #eee; }
.td:last-child { border: 0; }
.side { grid-column: 2; margin-top: -73px; height: 689px; background: #3b3b3b; display: flex; flex-direction: column; align-items: center; }
.side > svg { width: 24px; height: 24px; margin: 8px 0; }
.side hr { width: 28px; height: 1px; border: 0; background: #666; margin: 0; }
.side .h1 { margin: 13px 0 12px; }
.side .h2 { margin: 218px 0 0; }
.side .gear { margin: 10px 0 0; }
.work, .side { min-height: 0; }

/* Excel window */
.excel { position: absolute; left: 33px; top: 49px; width: 1283px; height: 664px; border: 1px solid #107c41; border-radius: 8px; overflow: hidden; background: #f0f0f0; display: flex; flex-direction: column; box-shadow: 0 1px 4px #0008; }
.title { height: 48px; flex: none; background: #117d42; display: flex; align-items: center; color: #fff; }
.title > svg:first-child { width: 160px; margin-right: -4px; }
.jr { width: 24px; height: 24px; border-radius: 50%; background: #986f0b; text-align: center; font-size: 11px; line-height: 24px; }
.uname { margin-left: 9px; width: 271px; font-size: 11.200px; letter-spacing: -.15px; }
.search { width: 345px; height: 32px; margin-top: 1px; background: #cfe3d8; border-radius: 3px; display: flex; align-items: center; justify-content: flex-end; gap: 14px; padding-right: 21px; color: #2b6e4a; font-size: 13.5px; }
.doc { margin-left: 6px; font-size: 12px; letter-spacing: .05px; }
.qat { margin-left: auto; margin-right: 0; }
.tabs { height: 30px; flex: none; display: flex; justify-content: space-between; }
.share { margin: 3px 0 0 12px; width: 89px; height: 24px; background: #117d42; color: #fff; border-radius: 4px; display: flex; align-items: center; padding: 0 7px 0 3px; }
.share span { margin: 0 4px 0 auto; font-size: 13.8px; }
.rtabs { display: grid; grid-template-columns: 67px 53px 63px 54px 54px 108px 52px 120px 56px; margin-right: 3px; line-height: 30px; font-size: 13.7px; }
.rtabs span { text-align: center; }
.rtabs .on b { display: inline-block; height: 26px; border-bottom: 2px solid #117d42; width: 103px; }
.ribbon { margin: 0 8px; height: 100px; flex: none; background: #fff; border-radius: 8px; display: grid; grid-template-columns: 31px 76px 161px 96px 172px 162px 228px 236px 103px; box-shadow: 0 0 2px #0002; }
.g { display: flex; flex-direction: column; border-right: 1px solid #ccc; margin: 5px 0 6px; min-width: 0; }
.g8 { border: 0; }
.g0 { justify-content: flex-end; align-items: center; padding: 0 4px 3px 0; }
.body { height: 78px; display: flex; flex: none; }
.body.col { flex-direction: column; }
.lab { height: 12px; display: flex; justify-content: center; line-height: 13px; font-size: 11.3px; direction: rtl; position: relative; }
.lab svg { position: absolute; left: 4px; top: 3px; }
.big { display: flex; flex-direction: column; align-items: center; font-size: 12.2px; line-height: 14px; direction: rtl; }
.big > svg:first-child { margin-top: -1px; }
.big .dd { display: flex; align-items: center; gap: 3px; }
.g1 .big { width: 74px; }
.g2 .body { padding-left: 5px; }
.g2 .big:nth-child(1) { width: 55px; }
.g2 .big:nth-child(2) { width: 49px; }
.g2 .body > svg { margin-left: 4px; margin-top: -1px; }
.sm { height: 26px; display: flex; align-items: center; justify-content: flex-end; padding-right: 11px; gap: 4px; font-size: 12.5px; line-height: 18px; }
.sm > svg:first-child { margin-right: auto; margin-left: 17px; }
.g4 .body { padding-left: 4px; }
.g4 .big:nth-child(1) { width: 55px; }
.g4 .big:nth-child(2) { width: 47px; }
.g4 .big:nth-child(3) { width: 59px; }
.combo { height: 24px; border: 1px solid #888; border-radius: 4px; display: flex; align-items: center; justify-content: space-between; padding: 0 3px 0 1px; font-size: 11.5px; }
.combo.wide { margin: 7px 8px 6px 7px; width: 146px; font-size: 12.5px; }
.frow { display: flex; margin: 7px 0 6px 5px; }
.g7 .body > svg { margin-left: 5px; }
.combo.s { width: 47px; }
.combo.f { width: 119px; margin-left: 2px; justify-content: flex-start; gap: 6px; font-size: 11px; }
.g6 .body > svg { margin-top: -1px; }
.g8 .body > svg { margin: -1px 0 0 1px; }
.paste { margin-left: 8px; color: #aaa; }
.paste > svg:last-child { margin-top: 5px; }
.fbar { height: 41px; flex: none; display: flex; align-items: center; padding: 0 8px 0 8px; }
.box { height: 26px; background: #fff; border: 1px solid #d0d0d0; border-radius: 4px; display: flex; align-items: center; }
.name { width: 102px; padding: 0 4px 0 6px; justify-content: space-between; font-size: 11.5px; }
.fx { width: 74px; padding-left: 5px; }
.fx i { font: italic 19px "Liberation Serif", serif; -webkit-text-stroke: .3px #333; margin-left: 7px; color: #333; line-height: 20px; }
.formula { margin-left: 4px; flex: 1; justify-content: flex-end; padding: 0 3px 4px; }

/* sheet */
.sheet { height: 389px; flex: none; display: flex; }
.gridclip { width: 1260px; height: 389px; overflow: hidden; background: #fff; }
.grid { table-layout: fixed; width: 1260px; border-collapse: separate; border-spacing: 0; font-size: 12.6px; color: #000; }
.c0 { width: 26px; } .w251 { width: 251px; } .w78 { width: 78px; } .w123 { width: 123px; } .w85 { width: 85px; } .w56 { width: 56px; }
.grid th, .grid td { height: 20px; padding: 0; font-weight: normal; line-height: 17px; border-right: 1px solid #dedede; border-bottom: 1px solid #dedede; overflow: hidden; white-space: nowrap; }
.grid td { text-align: right; padding: 1px 2px 0 0; }
.grid .heads td { font-size: 13.8px; }
.gl td:nth-child(10) { font-size: 13.4px; }
.grid th { background: #f0f0f0; text-align: center; font-size: 12px; }
.grid tbody th { border-right-color: #999; border-bottom-color: #c8c8c8; padding-top: 1px; }
.grid thead th { border-bottom-color: #999; border-right: 1px solid #b0b0b0; padding-left: 1px; }
.grid thead .last { border-right: 0; padding-left: 10px; }
.corner svg { margin: 0 2px 0 auto; }
.grid thead .sel { background: #d2d2d2; color: #17683b; border-bottom: 2px solid #117d42; }
.grid .rsel { background: #d2d2d2; color: #17683b; border-right: 2px solid #117d42; }
.gl td { border-bottom-color: #a9d08e !important; }
.gl td:last-child { border-bottom-color: #dedede !important; background: #fff; }
.gr td { background: #e2efda; border-right-color: #e2efda; }
.gr td:last-child { border-right-color: #dedede; }
.gr td:nth-last-child(2), .gl:nth-child(n+2) td:nth-last-child(2) { border-right-color: #a9d08e; }
.grid .rel { position: relative; overflow: visible; }
.paint { position: absolute; left: 0; top: 1px; width: 20px; height: 20px; background: #fff; border: 1px solid #aaa; z-index: 2; }
.handle { position: absolute; right: 0; bottom: 0; width: 4px; height: 4px; background: #3f51b5; clip-path: polygon(100% 0, 100% 100%, 0 100%, 0 50%, 50% 50%, 50% 0); }
.cursor { position: absolute; left: -2px; top: -2px; width: 81px; height: 26px; border: 2px solid #217346; }
.vscroll { margin-left: 3px; width: 15px; border-radius: 7px; background: #f6f6f6; display: flex; flex-direction: column; align-items: center; }
.vscroll i { width: 9px; height: 322px; border-radius: 5px; background: #707070; }
.vscroll .dn { margin-top: 40px; }
.stabs { height: 32px; flex: none; display: flex; border-top: 1px solid #dcdcdc; }
.stabs .arr { margin-top: -1px; }
.st { padding: 0 9px; font-size: 12.8px; line-height: 31px; position: relative; }
.st.on { background: #fff; margin-top: -1px; width: 117px; height: 29px; border-radius: 0 0 4px 4px; font-weight: bold; font-size: 12.8px; line-height: 26px; padding: 0 9px; }
.st.on span { display: block; height: 26px; border-bottom: 2px solid #117d42; width: 99px; letter-spacing: -.05px; }
.st + .st { width: 108px; padding-left: 18px; background: linear-gradient(#ccc, #ccc) 3px 7px / 1px 18px no-repeat, linear-gradient(#ccc, #ccc) 106px 7px / 1px 18px no-repeat; }
.add { margin: 10px 0 0 41px; }
.dots { margin: 11px 0 0 378px; }
.hscroll { margin: 6px 0 0 15px; width: 475px; height: 17px; border-radius: 8px; background: #f6f6f6; display: flex; align-items: center; padding-left: 5px; }
.hscroll i { width: 396px; height: 9px; border-radius: 5px; background: #707070; margin-left: 4px; }
.hscroll .r { margin-left: 50px; }
.status { height: 23px; flex: none; border-top: 1px solid #c8c8c8; background: #f4f4f4; display: flex; align-items: center; font-size: 12px; line-height: 18px; padding: 0 12px 2px 0; }
.pct { width: 57px; padding-left: 21px; font-size: 11px; }
.status > svg { margin-top: 1px; }
.acc { margin-left: auto; margin-right: 3px; direction: rtl; }
.ready { margin-left: 19px; }

/* taskbar */
.taskbar { height: 48px; display: flex; justify-content: space-between; color: #fff; }
.apps { margin-left: 508px; display: flex; align-items: center; }
.apps > svg { width: 24px; height: 24px; margin: 0 10px; }
.open { margin-left: 2px; width: 40px; height: 40px; border-radius: 4px; display: flex; flex-direction: column; align-items: center; padding-top: 8px; border: 1px solid transparent; }
.open + .open { margin-left: 4px; }
.run { background: #2d2d2d; border-color: #333; }
.open svg { width: 24px; height: 24px; }
.open::after { content: ""; width: 6px; height: 3px; border-radius: 2px; background: #999; margin-top: 4px; }
.run::after { width: 16px; background: #4cc2ff; }
.tray { display: flex; align-items: center; padding-right: 20px; }
.ain { margin: 3px 20px 0 27px; width: 8px; font-size: 13px; }
.clock { width: 65px; display: flex; flex-direction: column; align-items: flex-end; font-size: 11.1px; line-height: 16px; margin-bottom: 1px; }
.badge { margin-left: 7px; width: 16px; height: 16px; border-radius: 50%; background: #4cc2ff; color: #111; font-size: 10px; line-height: 16px; text-align: center; }
```
